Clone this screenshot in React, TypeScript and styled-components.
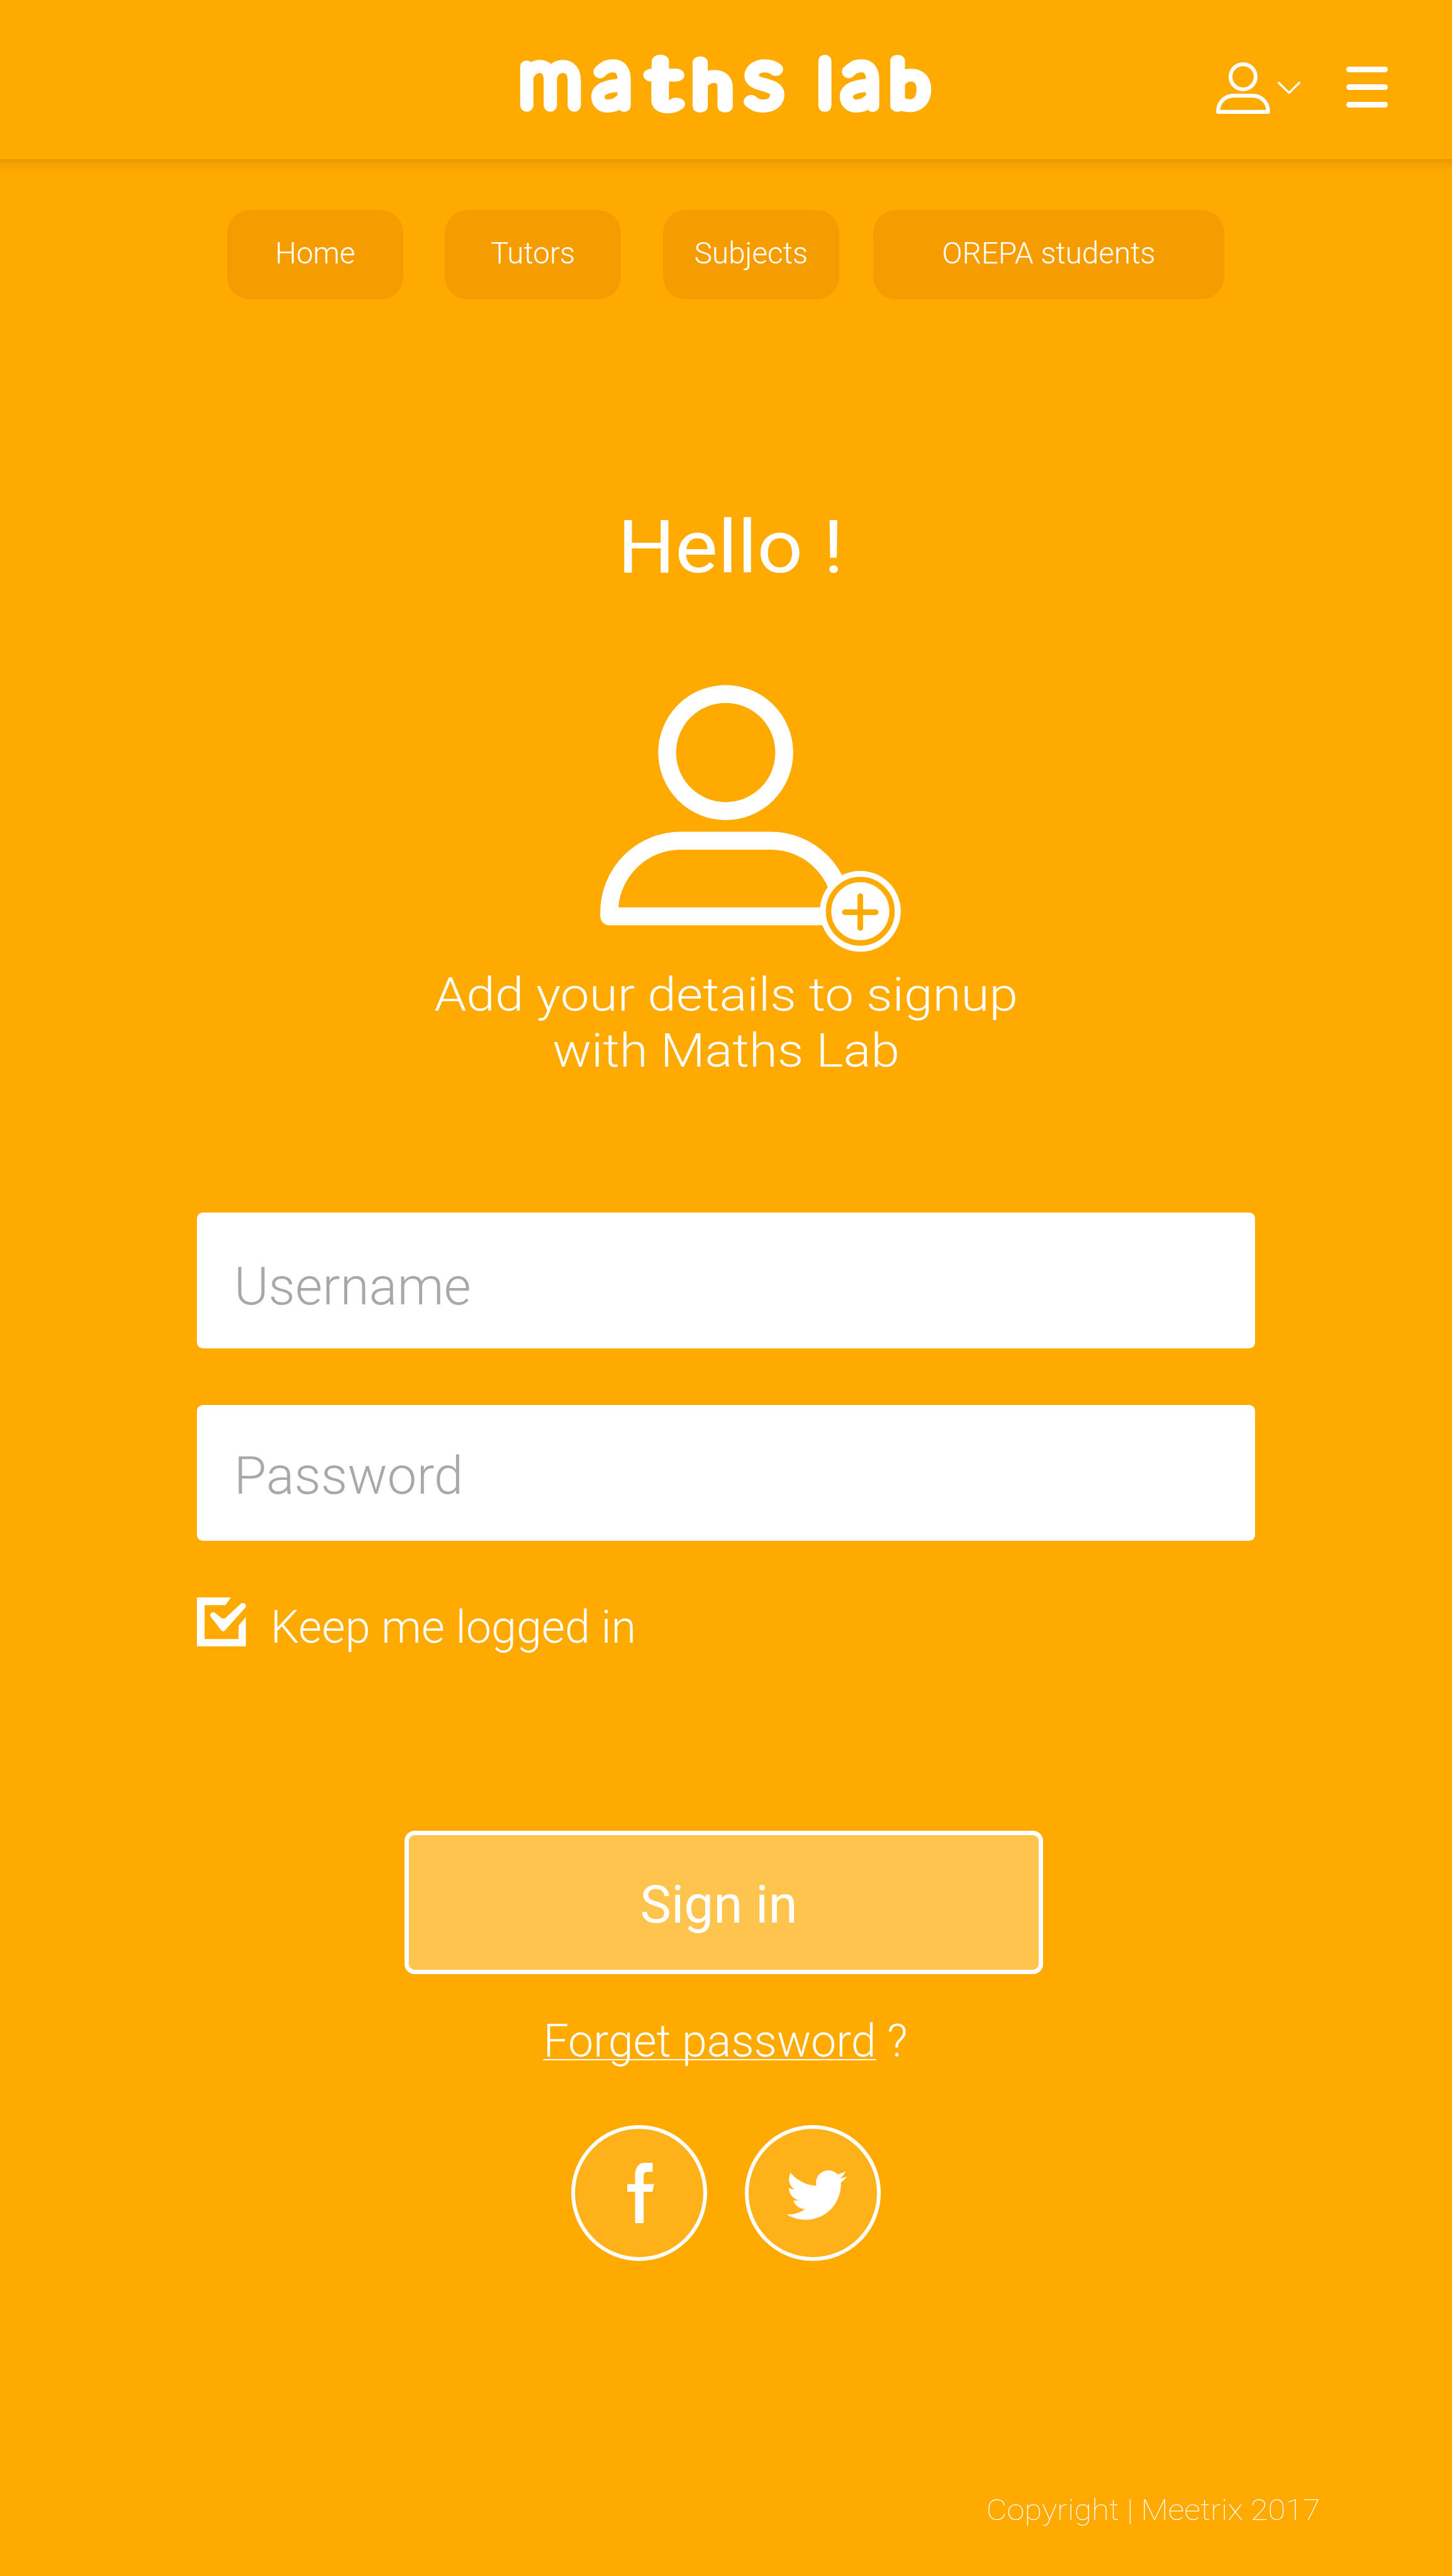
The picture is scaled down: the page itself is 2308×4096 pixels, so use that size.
import React from 'react';
import styled, { createGlobalStyle } from 'styled-components';
import { FaTwitter } from 'react-icons/fa';

const GlobalStyle = createGlobalStyle`
  * { box-sizing: border-box; }
  body { margin: 0; background: #ffaa00; }
`;

const Page = styled.div`
  width: 2308px;
  height: 4096px;
  overflow: hidden;
  display: flex;
  flex-direction: column;
  background: #ffaa00;
  color: #fff;
  font-family: Roboto, 'Liberation Sans', sans-serif;
  font-weight: 300;
`;

const Header = styled.header`
  flex: none;
  height: 252.8px;
  padding: 76px 102.3px 0 816px;
  display: flex;
  align-items: flex-start;
  justify-content: space-between;
`;

const HeaderShadow = styled.div`
  flex: none;
  height: 20px;
  margin-bottom: -20px;
  background: linear-gradient(#e89800, #f5a200 40%, #ffaa00);
`;

const LogoArt = styled.svg`
  width: 680px;
  height: 112px;
  overflow: visible;

  text {
    font-family: Lato, Roboto, sans-serif;
    font-weight: 200;
    fill: #fff;
    stroke: #fff;
    stroke-width: 19.5px;
    stroke-linejoin: round;
    stroke-linecap: round;
  }
`;

const Actions = styled.div`
  display: flex;
  align-items: flex-start;
`;

const SmallUser = styled.svg`
  width: 85.8px;
  height: 82px;
  margin-top: 23.1px;
`;

const Chevron = styled.svg`
  width: 36px;
  height: 20px;
  margin: 54px 72.5px 0 12.2px;
`;

const MenuButton = styled.div`
  width: 65.8px;
  margin-top: 29.9px;
  display: flex;
  flex-direction: column;
  gap: 18.7px;
`;

const MenuBar = styled.span`
  height: 9.4px;
  border-radius: 4.7px;
  background: #fff;
`;

const Nav = styled.nav`
  display: flex;
  margin-top: 81.4px;
  padding-left: 361.2px;
`;

const NavItem = styled.a<{ $width: number; $gap: number }>`
  width: ${(p) => p.$width}px;
  height: 141.7px;
  margin-right: ${(p) => p.$gap}px;
  padding-bottom: 4.2px;
  display: flex;
  align-items: center;
  justify-content: center;
  border-radius: 36px;
  background: #f59d00;
  font-size: 47.6px;
`;

const Intro = styled.section`
  display: flex;
  flex-direction: column;
  align-items: center;
`;

const Greeting = styled.h1`
  margin: 323.8px 0 0;
  padding-left: 14px;
  font-size: 116.5px;
  line-height: 140px;
  font-weight: 400;

  span {
    display: block;
    transform: scaleX(1.1);
  }
`;

const AddUser = styled.svg`
  width: 478.3px;
  height: 425px;
  margin: 149.5px 0 0 953.7px;
  align-self: flex-start;
`;

const Tagline = styled.p`
  margin: 22.9px 0 0;
  font-size: 74px;
  line-height: 89.3px;
  text-align: center;
  transform: scaleX(1.107);
`;

const Form = styled.form`
  width: 1681.3px;
  margin: 211.9px 0 0 313.4px;
  display: flex;
  flex-direction: column;
`;

const Field = styled.input<{ $drop: number }>`
  width: 100%;
  height: 216.6px;
  margin: 0 0 89.6px;
  padding: ${(p) => p.$drop}px 58.5px 0;
  border: 0;
  border-radius: 9.5px;
  background: #fff;
  font-family: inherit;
  font-weight: 300;
  font-size: 83.6px;
  color: #a8a8a8;

  &::placeholder {
    color: #a8a8a8;
    opacity: 1;
  }
`;

const KeepRow = styled.label`
  height: 90px;
  display: flex;
  gap: 38.7px;
  font-size: 71.9px;
  line-height: 77.8px;
`;

const CheckArt = styled.svg`
  width: 77.8px;
  height: 77.8px;
`;

const KeepText = styled.span`
  padding-top: 8.8px;
`;

const SignIn = styled.button`
  width: 1015.1px;
  height: 228.4px;
  margin: 281px 0 0 329.9px;
  padding: 6.4px 16.8px 0 0;
  border: 7px solid #fff;
  border-radius: 16px;
  background: #ffc44d;
  color: #fff;
  font-family: inherit;
  font-weight: 400;
  font-size: 83.6px;
`;

const Forget = styled.p`
  margin: 65px 0 0;
  padding-right: 2px;
  font-size: 71.7px;
  line-height: 84px;
  text-align: center;
`;

const ForgetLink = styled.a`
  text-decoration: underline;
  text-decoration-thickness: 2.2px;
  text-underline-offset: 4px;
  text-decoration-skip-ink: none;
`;

const Socials = styled.div`
  margin-top: 90.5px;
  display: flex;
  justify-content: center;
  gap: 60.3px;
`;

const SocialButton = styled.a<{ $shift: string }>`
  width: 216.1px;
  height: 216.1px;
  padding: ${(p) => p.$shift};
  display: flex;
  align-items: center;
  justify-content: center;
  border: 6px solid #fff;
  border-radius: 50%;
  background: #ffb11a;
`;

const FacebookMark = styled.svg`
  width: 42.7px;
  height: 96.5px;
`;

const Footer = styled.footer`
  margin-top: 368.6px;
  padding-right: 209.4px;
  display: flex;
  justify-content: flex-end;
  font-size: 45.8px;
  line-height: 56px;
  font-weight: 100;
`;

const Copyright = styled.span`
  transform: scaleX(1.107);
  transform-origin: right center;
`;

const NAV = [
  { label: 'Home', width: 279.8, gap: 66.2 },
  { label: 'Tutors', width: 279.8, gap: 67 },
  { label: 'Subjects', width: 280, gap: 54 },
  { label: 'OREPA students', width: 558.2, gap: 0 },
];

function UserShape() {
  return (
    <g fill="none" stroke="#fff" strokeWidth="39.5" strokeLinejoin="round">
      <circle cx="1601" cy="1661.4" r="129.2" />
      <path d="M1344 2022.8V2014A158 158 0 0 1 1502 1856H1700A158 158 0 0 1 1858 2014V2022.8Z" />
    </g>
  );
}

function Logo() {
  return (
    <LogoArt viewBox="816 76 680 112">
      <text y="168" fontSize="129">
        <tspan x="825" fontSize="126">m</tspan>
        <tspan x="943">a</tspan>
        <tspan x="1031" y="170" fontSize="109" textLength="48" lengthAdjust="spacingAndGlyphs">t</tspan>
        <tspan x="1102" y="169" fontSize="96" textLength="61" lengthAdjust="spacingAndGlyphs">h</tspan>
        <tspan x="1185" y="168" textLength="59" lengthAdjust="spacingAndGlyphs">s</tspan>
        <tspan> </tspan>
        <tspan x="1301" fontSize="98">l</tspan>
        <tspan x="1338">a</tspan>
        <tspan x="1416" fontSize="98" textLength="60" lengthAdjust="spacingAndGlyphs">b</tspan>
      </text>
    </LogoArt>
  );
}

export default function App() {
  return (
    <Page>
      <GlobalStyle />
      <Header>
        <Logo />
        <Actions>
          <SmallUser viewBox="1324 1512 554 531">
            <UserShape />
          </SmallUser>
          <Chevron viewBox="0 0 36 20">
            <path d="M1.8 1.8L18 17.6L34.2 1.8" fill="none" stroke="#fff" strokeWidth="3.4" strokeLinecap="round" strokeLinejoin="round" />
          </Chevron>
          <MenuButton>
            <MenuBar />
            <MenuBar />
            <MenuBar />
          </MenuButton>
        </Actions>
      </Header>
      <HeaderShadow />
      <Nav>
        {NAV.map((n) => (
          <NavItem key={n.label} $width={n.width} $gap={n.gap}>
            {n.label}
          </NavItem>
        ))}
      </Nav>
      <Intro>
        <Greeting>
          <span>Hello !</span>
        </Greeting>
        <AddUser viewBox="1324 1512 664 590">
          <UserShape />
          <circle cx="1898" cy="2011.7" r="89.3" fill="#fff" />
          <circle cx="1898" cy="2011.7" r="70" fill="none" stroke="#ffaa00" strokeWidth="12" />
          <path d="M1864 2013.8H1932M1898 1978.5V2048.5" stroke="#ffaa00" strokeWidth="12.4" strokeLinecap="round" />
        </AddUser>
        <Tagline>
          Add your details to signup
          <br />
          with Maths Lab
        </Tagline>
      </Intro>
      <Form>
        <Field $drop={19} placeholder="Username" />
        <Field $drop={7.6} placeholder="Password" />
        <KeepRow>
          <CheckArt viewBox="0 0 108 108">
            <path d="M0 0H75L63 17H17V92H92V62L108 43V108H0Z" fill="#fff" />
            <path d="M35 33Q30 33 29 41L54 73Q58 77 62 73L108 21V16Q104 10 98 13L62 46H55L41 35Q38 32 35 33Z" fill="#fff" />
          </CheckArt>
          <KeepText>Keep me logged in</KeepText>
        </KeepRow>
        <SignIn type="button">Sign in</SignIn>
      </Form>
      <Forget>
        <ForgetLink>Forget password</ForgetLink> ?
      </Forget>
      <Socials>
        <SocialButton $shift="0 0 0 6px">
          <FacebookMark viewBox="0 0 59.2 134">
            <path d="M17.3 134V64H0V47H17.3V27C17.3 10 26 0 37 0H56V20H44C38 20 36.2 24 36.2 29V47H59.2L55.6 64H36.2V134Z" fill="#fff" />
          </FacebookMark>
        </SocialButton>
        <SocialButton $shift="6px 0 0 11.6px">
          <FaTwitter size={96.6} color="#fff" />
        </SocialButton>
      </Socials>
      <Footer>
        <Copyright>Copyright | Meetrix 2017</Copyright>
      </Footer>
    </Page>
  );
}
